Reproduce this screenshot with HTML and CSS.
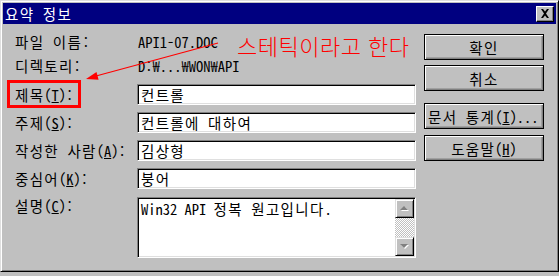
FILE: index.html
```html
<!DOCTYPE html>
<html lang="ko">
<head>
<meta charset="utf-8">
<link rel="stylesheet" href="styles.css">
</head>
<body>
<div class="window">
  <div class="titlebar">
    <span class="title">요약 정보</span>
    <span class="close"><svg width="10" height="9" viewBox="0 0 10 9"><path d="M1 0h2l2 2.5 2-2.5h2l-3 4.5 3 4.5h-2l-2-2.5-2 2.5h-2l3-4.5z" fill="#000"/></svg></span>
  </div>
  <div class="content">
    <div class="form">
      <div class="row r-static"><span class="label">파일 이름<span class="lat">:</span></span><span class="value">API1-07.DOC</span></div>
      <div class="row r-static"><span class="label">디렉토리<span class="lat">:</span></span><span class="value">D:₩...₩WON₩API</span></div>
      <div class="row r-field"><span class="label">제목<span class="lat">(<u>T</u>):</span></span><span class="field">컨트롤</span></div>
      <div class="row r-field"><span class="label">주제<span class="lat">(<u>S</u>):</span></span><span class="field">컨트롤에 대하여</span></div>
      <div class="row r-field"><span class="label">작성한 사람<span class="lat">(<u>A</u>):</span></span><span class="field">김상형</span></div>
      <div class="row r-field"><span class="label">중심어<span class="lat">(<u>K</u>):</span></span><span class="field">붕어</span></div>
      <div class="row r-memo">
        <span class="label">설명<span class="lat">(<u>C</u>):</span></span>
        <div class="memo">
          <div class="memo-text"><span class="lat">Win32 API </span>정복 원고입니다<span class="lat">.</span></div>
          <div class="scroll">
            <div class="sbtn"><svg width="9" height="6" viewBox="0 0 9 6"><path d="M1 5h8L5 1z" fill="#fff"/><path d="M0 4h8L4 0z" fill="#808080"/></svg></div>
            <div class="track"></div>
            <div class="sbtn"><svg width="9" height="6" viewBox="0 0 9 6"><path d="M1 1h8L5 5z" fill="#fff"/><path d="M0 0h8L4 4z" fill="#808080"/></svg></div>
          </div>
        </div>
      </div>
    </div>
    <div class="buttons">
      <div class="btn b-ok">확인</div>
      <div class="btn b-cancel">취소</div>
      <div class="btn b-stats">문서 통계<span class="lat">(<u>I</u>)...</span></div>
      <div class="btn b-help">도움말<span class="lat">(<u>H</u>)</span></div>
    </div>
  </div>
  <div class="note">스테틱이라고 한다</div>
  <div class="redbox"></div>
  <svg class="arrow" width="559" height="272" viewBox="0 0 559 272"><line x1="218" y1="43" x2="96" y2="76" stroke="#ff0000" stroke-width="1.2"/><path d="M86 79L98.6 79.7 96.5 72z" fill="#ff0000"/></svg>
</div>
</body>
</html>
```
FILE: styles.css
```css
html, body { margin: 0; padding: 0; }
body {
  background: #c0c0c0;
  width: 559px;
  height: 276px;
  overflow: hidden;
  font-family: "Noto Sans Mono CJK KR", "Noto Sans CJK KR", monospace;
  font-size: 14.5px;
  color: #000;
}
.window {
  position: relative;
  box-sizing: border-box;
  width: 559px;
  height: 272px;
  background: #c0c0c0;
  border: 1px solid;
  border-color: #dfdfdf #000 #000 #dfdfdf;
  box-shadow: inset 1px 1px #fff, inset -1px -1px #808080;
  padding: 2px;
}
.titlebar {
  height: 21px;
  background: #000080;
  display: flex;
  align-items: center;
  justify-content: space-between;
  padding: 0 2px 0 2px;
}
.title {
  color: #fff;
  line-height: 21px;
  letter-spacing: 1.3px;
}
.close {
  box-sizing: border-box;
  width: 18px;
  height: 16px;
  background: #c0c0c0;
  border: 1px solid;
  border-color: #fff #000 #000 #fff;
  box-shadow: inset -1px -1px #808080;
  display: flex;
  align-items: center;
  justify-content: center;
}
.content {
  display: flex;
  padding: 5px 0 0 12px;
}
.form {
  display: flex;
  flex-direction: column;
  width: 401px;
}
.row {
  display: flex;
  align-items: center;
}
.label {
  width: 122px;
  flex: none;
  line-height: 17px;
  white-space: nowrap;
  letter-spacing: 1.3px;
}
.lat { letter-spacing: 0; }
.r-static { height: 24px; }
.r-static .value { padding-left: 1px; }
.r-field { height: 21px; margin-top: 7px; }
.r-memo { margin-top: 8px; align-items: flex-start; height: 61px; }
.field {
  box-sizing: border-box;
  width: 279px;
  height: 21px;
  background: #fff;
  border: 1px solid;
  border-color: #808080 #fff #fff #808080;
  box-shadow: inset 1px 1px #000, inset -1px -1px #dfdfdf;
  padding: 0 3px;
  line-height: 19px;
  white-space: nowrap;
  letter-spacing: 1.3px;
}
.memo {
  box-sizing: border-box;
  width: 279px;
  height: 61px;
  background: #fff;
  border: 1px solid;
  border-color: #808080 #fff #fff #808080;
  box-shadow: inset 1px 1px #000, inset -1px -1px #dfdfdf;
  display: flex;
  padding: 1px;
}
.memo-text {
  flex: 1;
  padding: 1px 2px;
  line-height: 17px;
  white-space: nowrap;
  overflow: hidden;
  letter-spacing: 1.3px;
}
.scroll {
  width: 19px;
  display: flex;
  flex-direction: column;
}
.sbtn {
  box-sizing: border-box;
  height: 19px;
  background: #c0c0c0;
  border: 1px solid;
  border-color: #dfdfdf #000 #000 #dfdfdf;
  box-shadow: inset 1px 1px #fff, inset -1px -1px #808080;
  display: flex;
  align-items: center;
  justify-content: center;
}
.track {
  flex: 1;
  background: repeating-conic-gradient(#fff 0 25%, #c0c0c0 0 50%) 0 0 / 2px 2px;
}
.buttons {
  display: flex;
  flex-direction: column;
  padding-top: 5px;
  margin-left: 8px;
}
.btn {
  box-sizing: border-box;
  width: 120px;
  height: 26px;
  border: 1px solid #000;
  box-shadow: inset 1px 1px #fff, inset -1px -1px #808080, inset -2px -2px #a0a0a0;
  display: flex;
  align-items: center;
  justify-content: center;
  white-space: nowrap;
  line-height: 17px;
  letter-spacing: 1.3px;
}
.b-cancel { margin-top: 5px; }
.b-stats { margin-top: 12px; justify-content: flex-start; padding-left: 3px; }
.b-help { margin-top: 6px; }
.note {
  position: absolute;
  left: 236px;
  top: 30px;
  color: #ff0000;
  font-family: "Noto Sans CJK KR", sans-serif;
  font-size: 22px;
  font-weight: 300;
  line-height: 28px;
  white-space: nowrap;
  letter-spacing: 0.5px;
}
.redbox {
  position: absolute;
  left: 6px;
  top: 79px;
  width: 68px;
  height: 22px;
  border: 3px solid #ff0000;
}
.arrow {
  position: absolute;
  left: -1px;
  top: -1px;
}
```
